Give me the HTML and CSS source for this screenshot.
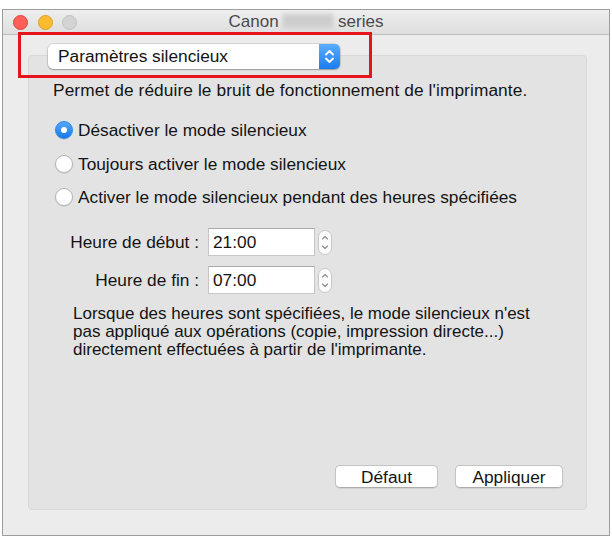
FILE: index.html
```html
<!DOCTYPE html>
<html lang="fr">
<head>
<meta charset="utf-8">
<title>Canon series</title>
<link rel="stylesheet" href="styles.css">
</head>
<body>
<div class="window">
  <div class="titlebar">
    <div class="lights">
      <span class="light red"></span>
      <span class="light yellow"></span>
      <span class="light grey"></span>
    </div>
    <div class="title">Canon <span class="blur"></span> series</div>
    <div></div>
  </div>
  <div class="content">
    <div class="popup">
      <span class="popup-label">Paramètres silencieux</span>
      <span class="popup-arrows">
        <svg width="21" height="25" viewBox="0 0 21 25"><path d="M7 10.5 L10.5 7 L14 10.5 M7 14.5 L10.5 18 L14 14.5" fill="none" stroke="#fff" stroke-width="1.8" stroke-linecap="round" stroke-linejoin="round"/></svg>
      </span>
    </div>
    <div class="panel">
      <p class="desc">Permet de réduire le bruit de fonctionnement de l'imprimante.</p>
      <div class="radios">
        <div class="radio"><span class="dot checked"></span>Désactiver le mode silencieux</div>
        <div class="radio"><span class="dot"></span>Toujours activer le mode silencieux</div>
        <div class="radio"><span class="dot"></span>Activer le mode silencieux pendant des heures spécifiées</div>
      </div>
      <div class="times">
        <div class="time-row">
          <span class="time-label">Heure de début :</span>
          <span class="field">21:00</span>
          <svg class="stepper" width="14" height="25" viewBox="0 0 14 25"><rect x="0.5" y="0.5" width="13" height="24" rx="6.5" fill="#fbfbfb" stroke="#c8c8c8"/><path d="M4.5 9 L7 6.5 L9.5 9 M4.5 16 L7 18.5 L9.5 16" fill="none" stroke="#8a8a8a" stroke-width="1.1" stroke-linecap="round" stroke-linejoin="round"/></svg>
        </div>
        <div class="time-row">
          <span class="time-label">Heure de fin :</span>
          <span class="field">07:00</span>
          <svg class="stepper" width="14" height="25" viewBox="0 0 14 25"><rect x="0.5" y="0.5" width="13" height="24" rx="6.5" fill="#fbfbfb" stroke="#c8c8c8"/><path d="M4.5 9 L7 6.5 L9.5 9 M4.5 16 L7 18.5 L9.5 16" fill="none" stroke="#8a8a8a" stroke-width="1.1" stroke-linecap="round" stroke-linejoin="round"/></svg>
        </div>
      </div>
      <p class="note">Lorsque des heures sont spécifiées, le mode silencieux n'est<br>pas appliqué aux opérations (copie, impression directe...)<br>directement effectuées à partir de l'imprimante.</p>
      <div class="buttons">
        <button class="btn btn-default">Défaut</button>
        <button class="btn btn-apply">Appliquer</button>
      </div>
    </div>
  </div>
  <div class="highlight"></div>
</div>
</body>
</html>
```
FILE: styles.css
```css
* { box-sizing: border-box; }

html, body {
  margin: 0;
  padding: 0;
  background: #ffffff;
}

body {
  font-family: "Liberation Sans", Arial, sans-serif;
  font-size: 17.3px;
  color: #141414;
  width: 612px;
  height: 537px;
  overflow: hidden;
}

.window {
  position: relative;
  margin: 9px 0 0 2px;
  width: 608px;
  height: 527px;
  border: 1px solid #9d9d9d;
  background: #ececec;
  display: flex;
  flex-direction: column;
}

.titlebar {
  height: 25px;
  display: grid;
  grid-template-columns: 1fr auto 1fr;
  align-items: center;
  background: linear-gradient(#eeeeee, #dedede);
  border-bottom: 1px solid #bcbcbc;
}

.lights {
  display: flex;
  gap: 9.5px;
  padding-left: 10px;
}

.light {
  width: 15px;
  height: 15px;
  border-radius: 50%;
}

.red { background: #fc5f57; border: 1px solid #e0443e; }
.yellow { background: #fdbc2e; border: 1px solid #dfa023; }
.grey { background: #d3d3d3; border: 1px solid #c4c4c4; }

.title {
  color: #4a4a4a;
  font-size: 17px;
  white-space: nowrap;
}

.blur {
  display: inline-block;
  width: 50px;
  height: 14px;
  vertical-align: -1px;
  background: #cdcdcd;
  filter: blur(2px);
}

.content {
  flex: 1;
  display: flex;
  flex-direction: column;
  padding: 9px 22px 25px 25px;
}

.popup {
  position: relative;
  z-index: 1;
  margin: 0 0 -14px 20px;
  width: 292px;
  height: 25px;
  display: flex;
  align-items: center;
  justify-content: space-between;
  background: #ffffff;
  border-radius: 5px;
  box-shadow: 0 0 0 0.5px rgba(0,0,0,0.18), 0 1px 1.5px rgba(0,0,0,0.25);
}

.popup-label {
  padding-left: 10px;
}

.popup-arrows {
  width: 21px;
  height: 25px;
  border-radius: 0 5px 5px 0;
  background: linear-gradient(#5aaefc, #1a7cf0);
  display: flex;
}

.panel {
  flex: 1;
  display: flex;
  flex-direction: column;
  background: #e3e3e3;
  border: 1px solid #d8d8d8;
  border-radius: 4px;
  padding: 24px 23px 21px 24px;
}

.desc {
  margin: 0;
  line-height: 20px;
  letter-spacing: 0.1px;
}

.radios {
  margin-top: 20px;
  display: flex;
  flex-direction: column;
  gap: 13.5px;
}

.radio {
  display: flex;
  align-items: center;
  gap: 5px;
  height: 20px;
  line-height: 20px;
}

.dot {
  margin-left: 2px;
  width: 18px;
  height: 18px;
  border-radius: 50%;
  background: #ffffff;
  border: 1px solid #b3b3b3;
  box-shadow: 0 1px 1px rgba(0,0,0,0.08);
  display: flex;
  align-items: center;
  justify-content: center;
}

.dot.checked {
  background: linear-gradient(#55a9fb, #167ae9);
  border-color: #2b82e6;
}

.dot.checked::after {
  content: "";
  width: 6px;
  height: 6px;
  border-radius: 50%;
  background: #ffffff;
}

.times {
  margin-top: 21px;
  display: flex;
  flex-direction: column;
  gap: 10px;
}

.time-row {
  display: flex;
  align-items: center;
  height: 28px;
}

.time-label {
  width: 146px;
  text-align: right;
  margin-right: 9px;
}

.field {
  width: 107px;
  height: 28px;
  line-height: 27px;
  padding-left: 4px;
  background: #ffffff;
  border: 1px solid #c6c6c6;
  border-top-color: #a9a9a9;
}

.stepper {
  margin-left: 3px;
  display: block;
}

.note {
  margin: 11px 0 0 20px;
  font-size: 17px;
  line-height: 18px;
}

.buttons {
  margin-top: auto;
  display: flex;
  justify-content: flex-end;
  gap: 17px;
}

.btn {
  height: 23px;
  padding: 0;
  font-family: "Liberation Sans", Arial, sans-serif;
  font-size: 17.3px;
  color: #141414;
  background: #ffffff;
  border: 1px solid #c3c3c3;
  border-bottom-color: #acacac;
  border-radius: 5px;
  box-shadow: 0 1px 1px rgba(0,0,0,0.08);
  line-height: 20px;
}

.btn-default { width: 103px; }
.btn-apply { width: 108px; }

.highlight {
  position: absolute;
  left: 15px;
  top: 22px;
  width: 354px;
  height: 46px;
  border: 3px solid #e8141c;
  pointer-events: none;
  z-index: 2;
}
```
